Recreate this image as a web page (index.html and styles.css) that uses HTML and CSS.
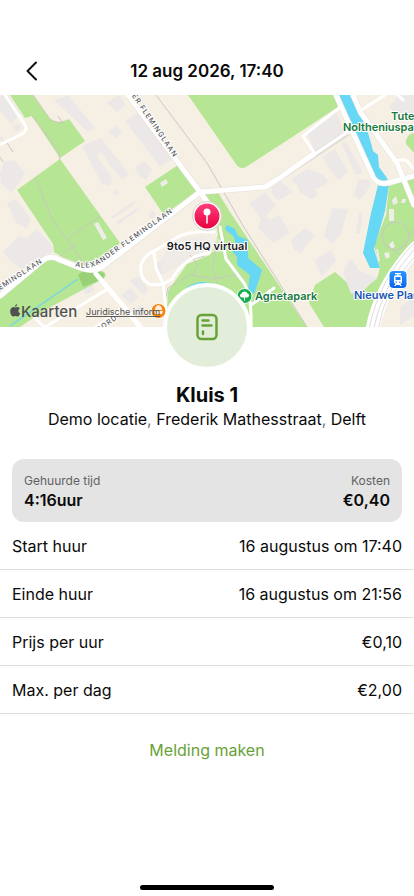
FILE: index.html
```html
<!DOCTYPE html>
<html lang="nl">
<head>
<meta charset="utf-8">
<meta name="viewport" content="width=device-width, initial-scale=1">
<title>Kluis 1</title>
<link rel="stylesheet" href="styles.css">
</head>
<body>
<header class="topbar">
  <button class="back" type="button" aria-label="Terug">
    <svg width="24" height="24" viewBox="0 0 24 24" aria-hidden="true"><path d="M16 3.500 7.500 12 16 20.500"/></svg>
  </button>
  <h1 class="topbar-title">12 aug 2026, 17:40</h1>
</header>

<main class="content">
  <svg class="map" viewBox="0 0 414 232" preserveAspectRatio="xMidYMid slice" role="img" aria-label="Kaart">
    <defs>
      <path id="lane-a" d="M125 -9 L174 63"/>
      <path id="lane-b" d="M75 171 Q90 176 104 166 L190 105"/>
      <path id="lane-c" d="M-29 214 L43 167"/>
      <path id="lane-d" d="M95 240 L128 216"/>
      <linearGradient id="pin" x1="0" y1="0" x2="0" y2="1"><stop offset="0" stop-color="#ff3f7c"/><stop offset="1" stop-color="#e8003f"/></linearGradient>
      <linearGradient id="train" x1="0" y1="0" x2="0" y2="1"><stop offset="0" stop-color="#2b96ff"/><stop offset="1" stop-color="#0a62ea"/></linearGradient>
    </defs>
    <rect width="414" height="232" fill="#f6f0e4"/>

    <!-- buildings -->
    <g fill="#ebe8e7">
      <path d="M0 0h8l12 18-8 12-12-14zM54 5l14-5 27 33-7 4zM107 8l12-8 7 10-9 7zM82 51l19-8 28 36-7 6-9-11-12-17-5 3 17 24-4 7-7-2zM108 37l8-6 6 6-6 6zM0 78l4-11 10-2 11 13-5 9-9 10-10-9zM7 108l9-4 15 20-5 9-10-5zM12 33l6-5 4 4-5 5zM0 42h3v4H0zM113 98l4-4 3 4-4 3zM111 122l23-16 2 2-23 16zM116 127l23-15 1 2-22 16z"/>
      <path d="M3 157l16-16 8 2 10-9 15 17 1 5-20 12-11 7-8-6zM125 26l15-10 32 48-12 8zM136 71l8-5 8 9-6 10-9-6zM170 152l14-9 20-2v16l-16 8-28 16-4-12 7-6zM148 119l5-4 4 6-5 3z"/>
      <path d="M306 36l30-19 9 20-30 20zM322 62l13-8 13 23-10 9zM343 46l4 2 16 30-7 2-14-30zM294 82l14-8 15 5 5 7-3 4-10 4 3 6-7 4-11-7-3-8-6-3zM272 92l8-6 13 11-15 9-7-8zM358 84l12 1-1 8-9 12-6-5zM249 108l16-11 11 13-10 11 5 4 8-5 11 18-17 10-15-15 3-9zM291 145l14-12 10 7-10 12-4 6-7-3zM332 113l16 1-7 25-9 10-8-8zM314 165l17-10 5 11-14 15zM359 118h4l-3 20h-4zM389 12l10-12h15v18l-13 7zM130 186l8-5 11 14-5 5zM83 194l8-5 4 6-9 5zM23 210l6-4 5 6-7 5zM121 200l10-7 8 9-9 7zM134 215l6-5 6 7-5 5zM400 213l14-12v20l-14 9z"/>
    </g>

    <!-- parks -->
    <g fill="#b6e593">
      <path d="M10 0h23l17 24q8 6 19 0l16 22-25 17L32 21l-7 2z"/>
      <path d="M17 95 60 64l60 84-23 20-9 4-26-10-8-5-1-8z"/>
      <path d="M0 202 44 166q8-4 15 0l20 8q14 5 22 1 8 5 2 9L45 215 20 232H0z"/>
      <path d="M188 0h149l1 12-58 38-34 22q-6 3-10-3z"/>
      <path d="M145 92 178 70l20 25-34 25z"/>
      <path d="M205 98l12-2 15 24 75 112H166l2-36 19-27 23-9 8-20-3-18z"/>
      <path d="M309 208l6-18 20-13 25 22 18-18 2-9-6-22 12-30 3-29 25-8v67q-34 42-42 82h-48z"/>
      <path d="M406 45q2-6 8-7v20l-8-9z"/>
    </g>
    <path d="M78 180l8-6 19 4-2 6-20 8z" fill="#99d276"/>
    <path d="M343 178l6-13 5 1 4 9 20 8-17 13-10 3z" fill="#ebe8e7"/>
    <path d="M167 142l42-3 14 7 3 11-20 0-16 8-28 13z" fill="#f1ece6" opacity=".6"/>
    <g fill="#eeeee6">
      <path d="M160 88l6-4 2 4-6 4zM94 129l4-2 9 16-4 2zM392 105l4-4 2 7-5 2zM402 104h4l-1 4h-4zM389 114h5v12h-5zM389 149l4-3 2 6-4 2zM384 158l5-1 1 5-4 2z"/>
      <path d="M380 125l3-6 2 1-3 8zM377 135l2-7 2 1-2 7zM374 144l2-6 2 1-1 6zM376 154l2 12h2l-2-12z"/>
    </g>

    <!-- water -->
    <g fill="#66d7f5">
      <path d="M339 0h14l15 38 3 10 2 8 5 4 1 12 8 11 2 7-4 26-11 38 6 19h-10l-7-15 8-40 7-28-26-55z"/>
      <path d="M227 130l8 4 3 7 10 4 0 18 14 12-3 10-5 14-6-5 2-14-13-10 0-8-6-7 5-4-2-9-9-8z"/>
      <path d="M187 192q16-9 28-2v6h-28z"/>
    </g>
    <path d="M10 231 78 184" stroke="#71d7e9" stroke-width="1.500"/>

    <!-- footpaths -->
    <g class="paths">
      <path d="M33 0l17 24q9 6 15 2M32 21l26 34 2 10M58 21l4 6M35 82l17 42 36 49M70 142l30-21M60 161l16-12"/>
      <path d="M168 193l22-13 25 4 25-5M190 160l8 11-6 10M217 150l-5 22 5 16M168 193l-3 14M188 165l17-4"/>
      <path d="M382 141q2-13 13-14 13 1 14 13-1 13-13 15-13-2-14-14zM386 150l22 15M400 155l14-20"/>
      <path d="M0 51l12-6M7 48l6 9M0 62l3 5"/>
    </g>
    <path class="rail" d="M156 0l51 68 35 61 65 103"/>

    <!-- streets: casing first, then surface -->
    <g class="casing">
      <path d="M0 201 42 166q8-7 18-1l18 7q14 6 24 0l98-75 65-5 13-8 70-46"/>
      <path d="M128 0l72 97 10 14M336 0l9 20 28 62q4 8 15 6l26-7M353 0l8 18 36 50 17 42"/>
    </g>
    <g class="streets">
      <path d="M0 201 42 166q8-7 18-1l18 7q14 6 24 0l98-75 65-5 13-8 36-25"/>
      <path d="M128 0l72 97 10 14"/>
      <path d="M96 179l34 40 10 13"/>
      <path d="M336 0l9 20 28 62q4 8 15 6l26-7M353 0l8 18 36 50 17 42"/>
    </g>
    <g class="streets streets-small">
      <path d="M339 13l-36 28 12 18 34-23M363 14l22-14M395 67q6-4 12-1l7 8M0 50l22-11q6-4 3-9L5 0"/>
      <path d="M106 195 45 232M34 222l10 10M120 215 96 232M398 0l5 5"/>
      <path d="M214 137q-24-2-38 6l-20 12q-12 5-15 15-2 13 8 19 12 3 23-5 8-14 22-22l16-5M154 157l2 16 7 15 3 26M220 132l6 32 18 24q8 13 7 44M251 210l23-17"/>
    </g>
    <g class="streets streets-main">
      <path d="M416 153q-36 38-44 84"/>
    </g>
    <path class="lane-lines" d="M416 146q-37 38-47 88M416 152q-34 38-43 84M416 160q-32 34-38 76"/>

    <!-- street names -->
    <g class="street-name">
      <text text-anchor="end"><textPath href="#lane-a" startOffset="100%">DER FLEMINGLAAN</textPath></text>
      <text><textPath href="#lane-b">ALEXANDER FLEMINGLAAN</textPath></text>
      <text text-anchor="end"><textPath href="#lane-c" startOffset="100%">FLEMINGLAAN</textPath></text>
      <text><textPath href="#lane-d" startOffset="4">OORD</textPath></text>
    </g>

    <!-- places -->
    <g class="place place-park">
      <text x="391" y="25">Tute</text>
      <text x="343" y="36">Noltheniuspark</text>
      <text x="255" y="205">Agnetapark</text>
    </g>
    <text class="place place-station" x="354" y="204">Nieuwe Plantage</text>

    <circle cx="244.500" cy="201" r="7.500" fill="#15ad4d" stroke="#fff"/>
    <path d="M244.500 196.500q2.500 0 3 2 2 .5 1.500 2.500-.5 1.500-2.500 1.500h-1.500v3h-1v-3h-1.500q-2 0-2.500-1.500-.5-2 1.500-2.500.5-2 3-2z" fill="#fff"/>

    <rect x="389" y="175.500" width="18" height="18" rx="4" fill="url(#train)" stroke="#fff"/>
    <path fill-rule="evenodd" d="M395 178h6v1.200h-2.300v1h1.300q2 0 2 2v4.800q0 1.700-1.700 2l1.700 2h-1.700l-.8-1h-3l-.8 1H394l1.700-2q-1.700-.3-1.700-2v-4.800q0-2 2-2h1.300v-1H395zM395.500 182v3h5v-3zM395.500 186.500v1.300h1.300v-1.300zM399.200 186.500v1.300h1.300v-1.300z" fill="#fff"/>

    <!-- attribution -->
    <circle cx="158.500" cy="216" r="7.500" fill="#f58412" stroke="#fff"/>
    <path d="M155 214q0-3 3.500-4 3.500 1 3.500 4v1h-7zM154 216h9l-1 3h-7z" fill="#fff" opacity=".85"/>
    <path class="apple" transform="translate(10 209)" d="M7.200 0Q7.300 2.600 4.900 2.800 4.800.7 7.200 0zM5.200 3.500Q6.200 3 7.200 3 9 3 9.900 4.300 8.300 5.300 8.400 7 8.600 8.700 10.200 9.400 9.300 12.300 7.500 12.400L5.400 11.900 3.400 12.400Q1.200 12.300.4 8.900-.4 5.100 2 3.500 3.500 2.700 5.200 3.500z"/>
    <text class="brand" x="21" y="221.500">Kaarten</text>
    <text class="legal" x="86" y="220">Juridische inform</text>

    <!-- selected location -->
    <path d="M202 133h10l-5 6z" fill="#fff"/>
    <circle cx="207" cy="121" r="14.500" fill="#fff" stroke="#d9d0ca"/>
    <circle cx="207" cy="121" r="12.500" fill="url(#pin)"/>
    <circle cx="207" cy="117" r="3.500" fill="#fff"/>
    <path d="M207 118v10" stroke="#fff" stroke-width="1.500" stroke-linecap="round"/>
    <text class="place place-selected" x="207" y="155" text-anchor="middle">9to5 HQ virtual</text>
  </svg>

  <section class="locker">
    <div class="locker-badge">
      <svg width="24" height="28" viewBox="0 0 24 28" aria-hidden="true">
        <rect x="2.500" y="2" width="19" height="24" rx="4"/>
        <path d="M7.500 7.500h6M7.500 12.500h9M8 18.500v2.500"/>
      </svg>
    </div>
    <h2 class="locker-name">Kluis 1</h2>
    <p class="locker-place">Demo locatie<span class="comma">,</span> Frederik Mathesstraat<span class="comma">,</span> Delft</p>
  </section>

  <dl class="summary">
    <div class="summary-item">
      <dt>Gehuurde tijd</dt>
      <dd>4:16uur</dd>
    </div>
    <div class="summary-item summary-end">
      <dt>Kosten</dt>
      <dd>€0,40</dd>
    </div>
  </dl>

  <dl class="details">
    <div class="row"><dt>Start huur</dt><dd>16 augustus om 17:40</dd></div>
    <div class="row"><dt>Einde huur</dt><dd>16 augustus om 21:56</dd></div>
    <div class="row"><dt>Prijs per uur</dt><dd>€0,10</dd></div>
    <div class="row"><dt>Max. per dag</dt><dd>€2,00</dd></div>
  </dl>

  <button class="report" type="button">Melding maken</button>
</main>

<div class="home-indicator"></div>
</body>
</html>
```

FILE: styles.css
```css
* {
  box-sizing: border-box;
}

body {
  margin: 0;
  min-height: 100vh;
  display: flex;
  flex-direction: column;
  background: #fff;
  color: #0a0a0a;
  font-family: Inter, "Liberation Sans", sans-serif;
  font-size: 16px;
  line-height: 24px;
}

h1, h2, p, dl, dd {
  margin: 0;
}

button {
  border: 0;
  padding: 0;
  background: none;
  font: inherit;
  cursor: pointer;
}

.topbar {
  display: grid;
  grid-template-columns: 24px 1fr 24px;
  align-items: center;
  padding: 47px 20px 0;
  height: 95px;
}

.back {
  width: 24px;
  height: 24px;
}

.back svg {
  display: block;
  fill: none;
  stroke: #111;
  stroke-width: 2;
  stroke-linecap: round;
  stroke-linejoin: round;
}

.topbar-title {
  font-size: 17px;
  font-weight: 600;
  text-align: center;
}

.content {
  display: flex;
  flex-direction: column;
}

.map {
  display: block;
  width: 100%;
  height: 232px;
}

.paths,
.rail,
.lane-lines {
  fill: none;
  stroke: #c9c8c2;
  stroke-width: 1;
}

.lane-lines {
  stroke: #dcdcdc;
}

.casing {
  fill: none;
  stroke: #e3dfd8;
  stroke-width: 6;
  stroke-linejoin: round;
}

.streets {
  fill: none;
  stroke: #fff;
  stroke-width: 5;
  stroke-linecap: round;
  stroke-linejoin: round;
}

.streets-small {
  stroke-width: 3;
}

.streets-main {
  stroke-width: 14;
}

.street-name {
  fill: #55555a;
  stroke: #fff;
  stroke-width: 2;
  paint-order: stroke;
  font-size: 7px;
  font-weight: 500;
  letter-spacing: 1px;
}

.place {
  stroke: #fff;
  stroke-width: 2;
  stroke-linejoin: round;
  paint-order: stroke;
  font-size: 11px;
  font-weight: 600;
}

.place-park {
  fill: #177a3c;
}

.place-station {
  fill: #1c55b4;
}

.place-selected {
  fill: #1c1c1e;
}

.apple,
.brand {
  fill: #505052;
}

.brand {
  font-size: 15px;
  font-weight: 500;
}

.legal {
  fill: #505052;
  font-size: 9px;
  text-decoration: underline;
}

.locker {
  display: flex;
  flex-direction: column;
  align-items: center;
  padding: 0 12px;
  text-align: center;
}

.locker-badge {
  display: flex;
  align-items: center;
  justify-content: center;
  width: 88px;
  height: 88px;
  margin-top: -44px;
  border: 4px solid #fff;
  border-radius: 50%;
  background: #e3eeda;
}

.locker-badge svg {
  fill: none;
  stroke: #68a238;
  stroke-width: 2.5;
  stroke-linecap: round;
}

.locker-name {
  margin-top: 12px;
  font-size: 20px;
  font-weight: 700;
}

.comma {
  color: #77777a;
}

.summary {
  display: flex;
  justify-content: space-between;
  margin: 28px 12px 0;
  padding: 12px;
  border-radius: 12px;
  background: #e4e4e4;
}

.summary dt {
  color: #626262;
  font-size: 12px;
  line-height: 19px;
}

.summary dd {
  font-weight: 600;
  line-height: 20px;
}

.summary-end {
  text-align: right;
}

.row {
  display: flex;
  align-items: center;
  justify-content: space-between;
  height: 48px;
  padding: 0 12px;
  border-bottom: 1px solid #dedede;
}

.report {
  align-self: center;
  margin-top: 24px;
  color: #68a238;
}

.home-indicator {
  width: 134px;
  height: 5px;
  margin: auto auto 6px;
  border-radius: 3px;
  background: #000;
}
```
